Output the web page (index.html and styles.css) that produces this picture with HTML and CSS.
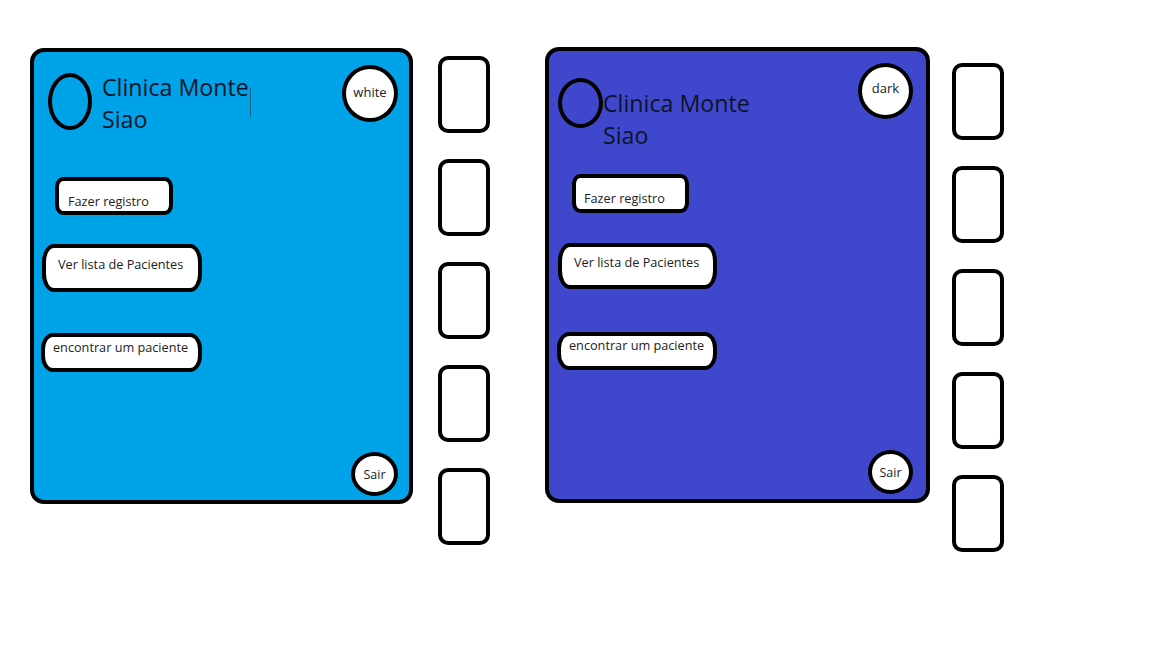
FILE: index.html
```html
<!DOCTYPE html>
<html lang="pt">
<head>
<meta charset="utf-8">
<title>Clinica Monte Siao</title>
<link rel="stylesheet" href="styles.css">
</head>
<body>
<div class="page">
  <section class="panel panel-light">
    <div class="header">
      <div class="logo"></div>
      <h1 class="title">Clinica Monte<span class="caret"></span><br>Siao</h1>
      <div class="toggle"><span>white</span></div>
    </div>
    <div class="btn btn-reg">Fazer registro</div>
    <div class="btn btn-list">Ver lista de Pacientes</div>
    <div class="btn btn-find">encontrar um paciente</div>
    <div class="exit">Sair</div>
  </section>
  <div class="thumbs thumbs-light">
    <div class="thumb"></div>
    <div class="thumb"></div>
    <div class="thumb"></div>
    <div class="thumb"></div>
    <div class="thumb"></div>
  </div>
  <section class="panel panel-dark">
    <div class="header">
      <div class="logo"></div>
      <h1 class="title">Clinica Monte<br>Siao</h1>
      <div class="toggle"><span>dark</span></div>
    </div>
    <div class="btn btn-reg">Fazer registro</div>
    <div class="btn btn-list">Ver lista de Pacientes</div>
    <div class="btn btn-find">encontrar um paciente</div>
    <div class="exit">Sair</div>
  </section>
  <div class="thumbs thumbs-dark">
    <div class="thumb"></div>
    <div class="thumb"></div>
    <div class="thumb"></div>
    <div class="thumb"></div>
    <div class="thumb"></div>
  </div>
</div>
</body>
</html>
```

FILE: styles.css
```css
* { box-sizing: border-box; }
html, body { margin: 0; padding: 0; background: #ffffff; }
body {
  width: 1152px;
  height: 648px;
  overflow: hidden;
  font-family: "Open Sans", "Noto Sans", sans-serif;
  color: #222;
}
.page {
  display: flex;
  align-items: flex-start;
}

/* ---------- panels ---------- */
.panel {
  display: flex;
  flex-direction: column;
  align-items: flex-start;
  height: 456px;
  border: 4px solid #000;
  border-radius: 14px;
}
.panel-light {
  width: 383px;
  margin-left: 30px;
  margin-top: 48px;
  background: #00a2e8;
}
.panel-dark {
  width: 385px;
  margin-left: 55px;
  margin-top: 47px;
  background: #3f48cc;
}

.header {
  display: flex;
  align-items: flex-start;
  width: 100%;
}
.panel-light .header { padding-top: 13px; }
.panel-dark .header { padding-top: 12px; }

.logo {
  border: 4px solid #000;
  border-radius: 50%;
  flex: none;
}
.panel-light .logo { width: 44px; height: 57px; margin: 8px 0 0 14px; }
.panel-dark .logo { width: 45px; height: 50px; margin: 15px 0 0 9px; }

.title {
  margin: 0;
  font-weight: 400;
  font-size: 23.2px;
  line-height: 32px;
  color: #0e1428;
  white-space: nowrap;
}
.panel-light .title { margin: 6px 0 0 10px; }
.panel-dark .title { margin: 24px 0 0 0; }

.caret {
  display: inline-block;
  position: relative;
  top: 17px;
  width: 1px;
  height: 29px;
  margin-left: 1px;
  vertical-align: top;
  background: #1f5f86;
}

.toggle {
  flex: none;
  margin-left: auto;
  display: flex;
  align-items: center;
  justify-content: center;
  background: #fff;
  border: 4px solid #000;
  border-radius: 50%;
  font-size: 13px;
  color: #222;
}
.panel-light .toggle { width: 56px; height: 57px; margin-right: 11px; padding-bottom: 3px; }
.panel-dark .toggle { width: 55px; height: 56px; margin-right: 13px; padding-bottom: 6px; }

/* ---------- buttons ---------- */
.btn {
  flex: none;
  background: #fff;
  border: 4px solid #000;
  font-size: 12.7px;
  line-height: 16px;
  color: #222;
  white-space: nowrap;
}
.btn-reg { border-radius: 8px / 10px; }
.btn-list { border-radius: 12px / 18px; }
.btn-find { border-radius: 12px / 16px; }

.panel-light .btn-reg  { width: 118px; height: 38px; margin: 42px 0 0 21px; padding: 12px 0 0 9px; }
.panel-light .btn-list { width: 160px; height: 48px; margin: 29px 0 0 8px;  padding: 8px 0 0 12px; }
.panel-light .btn-find { width: 161px; height: 39px; margin: 41px 0 0 7px;  padding: 2px 0 0 8px; }

.panel-dark .btn-reg  { width: 117px; height: 39px; margin: 23px 0 0 23px; padding: 12px 0 0 8px; }
.panel-dark .btn-list { width: 159px; height: 46px; margin: 30px 0 0 9px;  padding: 7px 0 0 12px; }
.panel-dark .btn-find { width: 160px; height: 38px; margin: 43px 0 0 8px;  padding: 1px 0 0 8px; }

.exit {
  flex: none;
  margin-top: auto;
  align-self: flex-end;
  display: flex;
  align-items: center;
  justify-content: center;
  background: #fff;
  border: 4px solid #000;
  border-radius: 50%;
  font-size: 12.5px;
  color: #222;
}
.panel-light .exit { width: 47px; height: 44px; margin-right: 11px; margin-bottom: 4px; }
.panel-dark .exit { width: 45px; height: 44px; margin-right: 13px; margin-bottom: 5px; }

/* ---------- side thumbnails ---------- */
.thumbs {
  display: flex;
  flex-direction: column;
  gap: 26px;
}
.thumbs-light { margin-left: 25px; margin-top: 56px; }
.thumbs-dark { margin-left: 22px; margin-top: 63px; }
.thumb {
  width: 52px;
  height: 77px;
  border: 4px solid #000;
  border-radius: 10px;
  background: #fff;
}
```
